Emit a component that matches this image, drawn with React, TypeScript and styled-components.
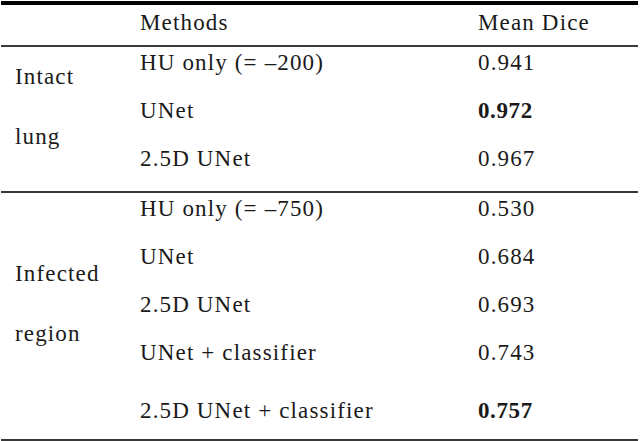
import { createGlobalStyle } from 'styled-components'
import styled from 'styled-components'

const GlobalStyle = createGlobalStyle`
  body {
    margin: 0;
    background: #fff;
  }
`

const Table = styled.div`
  width: 637px;
  margin: 1px 0 0 1px;
  border-top: 4px solid #000;
  font-family: 'Liberation Serif', 'Times New Roman', serif;
  font-size: 23px;
  letter-spacing: 1.15px;
  color: #1a1a1a;
`

const HeaderRow = styled.div`
  display: flex;
  height: 40px;
  border-bottom: 2px solid #3a3a3a;
  line-height: 35px;
`

const Spacer = styled.div`
  width: 139px;
`

const MethodCell = styled.div`
  width: 338px;
  white-space: nowrap;
`

const ValueCell = styled.div<{ $bold?: boolean }>`
  flex: 1;
  font-weight: ${(p) => (p.$bold ? 700 : 400)};
  letter-spacing: ${(p) => (p.$bold ? '0.6px' : '1.15px')};
`

const Group = styled.div`
  display: flex;
  border-bottom: 2px solid #383838;
`

const GroupLabel = styled.div`
  width: 125px;
  padding-left: 14px;
  padding-bottom: 24px;
  display: flex;
  flex-direction: column;
  justify-content: center;
  line-height: 60px;
`

const Rows = styled.div`
  flex: 1;
  display: flex;
  flex-direction: column;
`

const Row = styled.div<{ $last?: boolean }>`
  display: flex;
  height: ${(p) => (p.$last ? '54px' : '48px')};
  padding-top: ${(p) => (p.$last ? '10px' : '0')};
  box-sizing: border-box;
  line-height: 32px;
`

type Entry = { method: string; dice: string; best?: boolean }

const groups: { label: string[]; rows: Entry[]; lastGap?: boolean }[] = [
  {
    label: ['Intact', 'lung'],
    rows: [
      { method: 'HU only (= \u2013200)', dice: '0.941' },
      { method: 'UNet', dice: '0.972', best: true },
      { method: '2.5D UNet', dice: '0.967' },
    ],
  },
  {
    label: ['Infected', 'region'],
    lastGap: true,
    rows: [
      { method: 'HU only (= \u2013750)', dice: '0.530' },
      { method: 'UNet', dice: '0.684' },
      { method: '2.5D UNet', dice: '0.693' },
      { method: 'UNet + classifier', dice: '0.743' },
      { method: '2.5D UNet + classifier', dice: '0.757', best: true },
    ],
  },
]

export default function App() {
  return (
    <>
      <GlobalStyle />
      <Table>
        <HeaderRow>
          <Spacer />
          <MethodCell>Methods</MethodCell>
          <ValueCell>Mean Dice</ValueCell>
        </HeaderRow>
        {groups.map((g) => (
          <Group key={g.label.join(' ')}>
            <GroupLabel>
              {g.label.map((l) => (
                <span key={l}>{l}</span>
              ))}
            </GroupLabel>
            <Rows>
              {g.rows.map((r, i) => (
                <Row key={r.method} $last={g.lastGap && i === g.rows.length - 1}>
                  <MethodCell>{r.method}</MethodCell>
                  <ValueCell $bold={r.best}>{r.dice}</ValueCell>
                </Row>
              ))}
            </Rows>
          </Group>
        ))}
      </Table>
    </>
  )
}
